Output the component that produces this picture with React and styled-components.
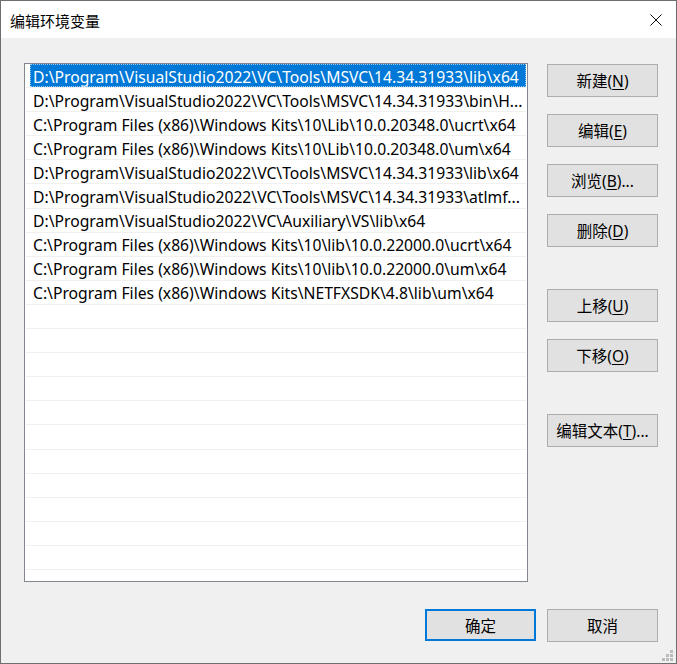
import React from 'react';
import styled, { createGlobalStyle } from 'styled-components';

const GlobalStyle = createGlobalStyle`
    html, body {
        margin: 0;
        padding: 0;
        background: #f0f0f0;
    }
    * {
        box-sizing: border-box;
    }
`;

const FONT = `"Noto Sans", "Noto Sans CJK SC", sans-serif`;

const paths = [
    'D:\\Program\\VisualStudio2022\\VC\\Tools\\MSVC\\14.34.31933\\lib\\x64',
    'D:\\Program\\VisualStudio2022\\VC\\Tools\\MSVC\\14.34.31933\\bin\\H...',
    'C:\\Program Files (x86)\\Windows Kits\\10\\Lib\\10.0.20348.0\\ucrt\\x64',
    'C:\\Program Files (x86)\\Windows Kits\\10\\Lib\\10.0.20348.0\\um\\x64',
    'D:\\Program\\VisualStudio2022\\VC\\Tools\\MSVC\\14.34.31933\\lib\\x64',
    'D:\\Program\\VisualStudio2022\\VC\\Tools\\MSVC\\14.34.31933\\atlmf...',
    'D:\\Program\\VisualStudio2022\\VC\\Auxiliary\\VS\\lib\\x64',
    'C:\\Program Files (x86)\\Windows Kits\\10\\lib\\10.0.22000.0\\ucrt\\x64',
    'C:\\Program Files (x86)\\Windows Kits\\10\\lib\\10.0.22000.0\\um\\x64',
    'C:\\Program Files (x86)\\Windows Kits\\NETFXSDK\\4.8\\lib\\um\\x64',
];

const sideButtons = [
    { label: '新建', key: 'N' },
    { label: '编辑', key: 'E' },
    { label: '浏览', key: 'B', more: true },
    { label: '删除', key: 'D', gapAfter: true },
    { label: '上移', key: 'U' },
    { label: '下移', key: 'O', gapAfter: true },
    { label: '编辑文本', key: 'T', more: true },
];

function App() {
    const rows = [...paths, ...Array(12).fill('')];
    return (
        <>
            <GlobalStyle />
            <Window>
                <TitleBar>
                    <Title>编辑环境变量</Title>
                    <CloseButton>
                        <svg width="12" height="12" viewBox="0 0 12 12">
                            <path d="M0.5 0.5 L11.5 11.5 M11.5 0.5 L0.5 11.5" stroke="#111" strokeWidth="1" fill="none" />
                        </svg>
                    </CloseButton>
                </TitleBar>
                <Body>
                    <Main>
                        <ListBox>
                            {rows.map((p, i) => (
                                <Row key={i}>
                                    {p && <Item selected={i === 0}>{p}</Item>}
                                </Row>
                            ))}
                        </ListBox>
                        <SideColumn>
                            {sideButtons.map(b => (
                                <Button key={b.key} spaced={b.gapAfter}>
                                    {b.label}(<u>{b.key}</u>){b.more ? '...' : ''}
                                </Button>
                            ))}
                        </SideColumn>
                    </Main>
                    <Footer>
                        <Button primary>确定</Button>
                        <Button>取消</Button>
                    </Footer>
                    <Grip>
                        {[[8, 0], [4, 4], [8, 4], [0, 8], [4, 8], [8, 8]].map(([x, y], i) => (
                            <GripDot key={i} style={{ left: x, top: y }} />
                        ))}
                    </Grip>
                </Body>
            </Window>
        </>
    );
}

const Window = styled.div`
    width: 677px;
    height: 664px;
    border: 1px solid #6e6e6e;
    display: flex;
    flex-direction: column;
    background: #f0f0f0;
    font-family: ${FONT};
    color: #000;
`;

const TitleBar = styled.div`
    height: 37px;
    background: #fff;
    display: flex;
    align-items: center;
    justify-content: space-between;
    padding: 0 14px 0 9px;
`;

const Title = styled.div`
    font-size: 15px;
    padding-top: 1px;
`;

const CloseButton = styled.div`
    width: 12px;
    height: 12px;
    display: flex;
    margin-top: 1px;
`;

const Body = styled.div`
    flex: 1;
    position: relative;
    padding: 25px 18px 0 23px;
    display: flex;
    flex-direction: column;
`;

const Main = styled.div`
    display: flex;
    gap: 19px;
`;

const ListBox = styled.div`
    width: 504px;
    height: 519px;
    background: #fff;
    border: 1px solid #828790;
    overflow: hidden;
`;

const Row = styled.div`
    height: 24.1px;
    margin: 0 1px;
    border-bottom: 1px solid #f0f0f0;
    display: flex;
`;

const Item = styled.div`
    flex: 1;
    margin-left: 4px;
    padding: 2px 0 0 3px;
    display: flex;
    align-items: center;
    font-size: 15.7px;
    white-space: nowrap;
    overflow: hidden;
    background: ${p => (p.selected ? '#0078d7' : 'transparent')};
    color: ${p => (p.selected ? '#fff' : '#000')};
    outline: ${p => (p.selected ? '1px dotted #99c9ef' : 'none')};
    outline-offset: -1px;
`;

const SideColumn = styled.div`
    display: flex;
    flex-direction: column;
    gap: 17px;
    padding-top: 1px;
`;

const Button = styled.div`
    width: 111px;
    height: ${p => (p.primary ? '32px' : '33px')};
    display: flex;
    align-items: center;
    justify-content: center;
    background: #e1e1e1;
    border: ${p => (p.primary ? '2px solid #0078d7' : '1px solid #adadad')};
    font-size: 15.5px;
    margin-bottom: ${p => (p.spaced ? '25px' : '0')};
    white-space: nowrap;

    u {
        text-decoration-thickness: 1px;
        text-underline-offset: 2px;
    }
`;

const Footer = styled.div`
    display: flex;
    justify-content: flex-end;
    gap: 11px;
    margin-top: 27px;
`;

const Grip = styled.div`
    position: absolute;
    right: 3px;
    bottom: 2px;
    width: 11px;
    height: 11px;
`;

const GripDot = styled.span`
    position: absolute;
    width: 3px;
    height: 3px;
    background: #bcbcbc;
`;

export default App;
